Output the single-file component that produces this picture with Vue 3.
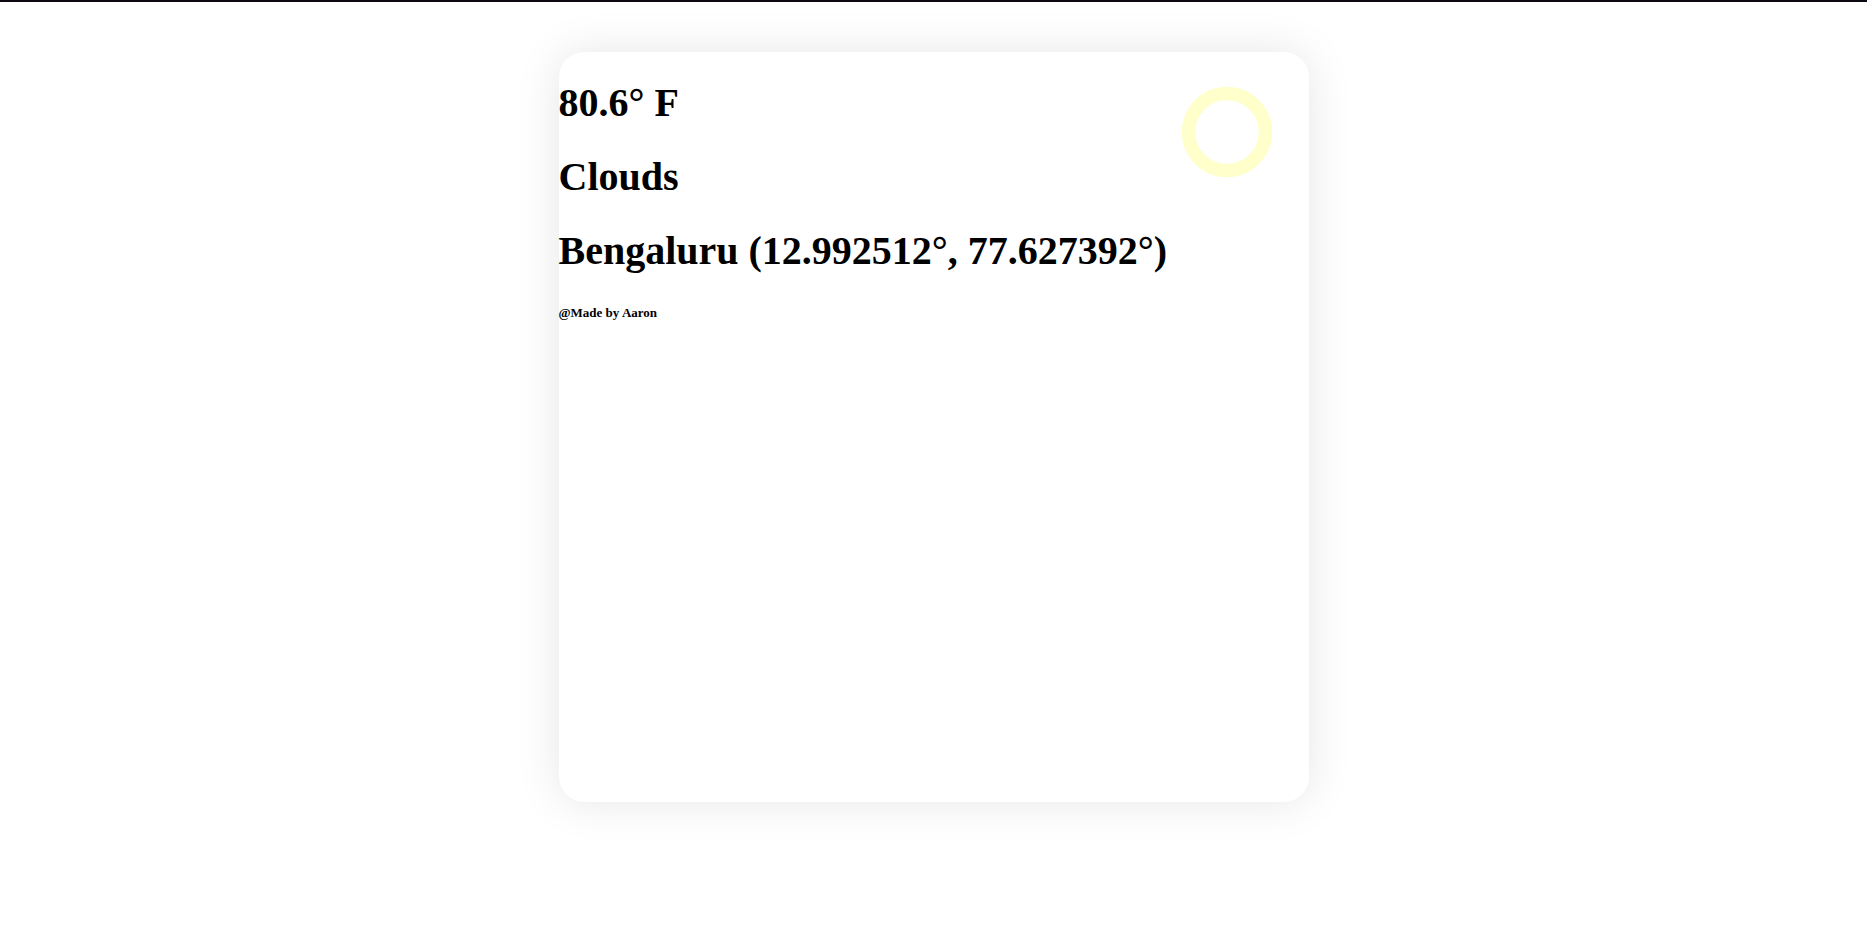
<script setup>
const weather = {
  temperature: '80.6° F',
  condition: 'Clouds',
  place: 'Bengaluru (12.992512°, 77.627392°)',
}
</script>

<template>
  <div class="page">
    <main class="card">
      <svg class="sun" viewBox="0 0 90 90" aria-hidden="true">
        <circle cx="45" cy="45" r="38.5" fill="none" stroke="#ffffcb" stroke-width="13.5" />
      </svg>
      <h1>{{ weather.temperature }}</h1>
      <h1>{{ weather.condition }}</h1>
      <h1>{{ weather.place }}</h1>
      <h6>@Made by Aaron</h6>
    </main>
  </div>
</template>

<style>
body {
  margin: 0;
  background: #fff;
}
</style>

<style scoped>
.page {
  display: flow-root;
  min-height: 100vh;
  box-sizing: border-box;
  border-top: 2px solid #0d0812;
  font-family: "Liberation Serif", "Times New Roman", serif;
  color: #000;
}

.card {
  position: relative;
  display: flow-root;
  box-sizing: border-box;
  width: 750px;
  max-width: 100%;
  min-height: 750px;
  margin: 50px auto;
  border-radius: 25px;
  background: #fff;
  box-shadow: 0 0 45px #e6e6e6;
}

h1 {
  margin: 28px 0;
  font-size: 40px;
  line-height: 46px;
}

h6 {
  margin: 31px 0;
  font-size: 13px;
  line-height: 15px;
}

.sun {
  position: absolute;
  top: 35px;
  right: 37px;
  width: 90px;
  height: 90px;
}
</style>
